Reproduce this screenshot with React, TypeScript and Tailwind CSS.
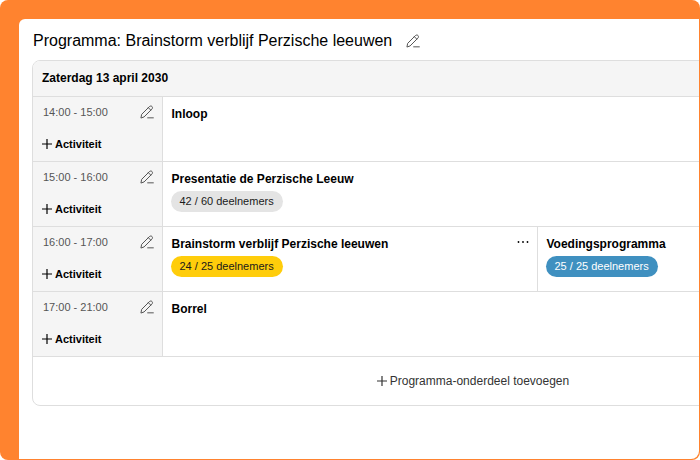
import React from 'react';

type Activity = {
  title: string;
  participants?: string;
  badge?: string;
  menu?: boolean;
};

type Slot = {
  time: string;
  activities: Activity[];
};

const slots: Slot[] = [
  { time: '14:00 - 15:00', activities: [{ title: 'Inloop' }] },
  {
    time: '15:00 - 16:00',
    activities: [
      {
        title: 'Presentatie de Perzische Leeuw',
        participants: '42 / 60 deelnemers',
        badge: 'bg-[#e4e4e4] text-[#1a1a1a]'
      }
    ]
  },
  {
    time: '16:00 - 17:00',
    activities: [
      {
        title: 'Brainstorm verblijf Perzische leeuwen',
        participants: '24 / 25 deelnemers',
        badge: 'bg-[#ffcd0b] text-[#1a1a1a]',
        menu: true
      },
      {
        title: 'Voedingsprogramma',
        participants: '25 / 25 deelnemers',
        badge: 'bg-[#3f90c0] text-white'
      }
    ]
  },
  { time: '17:00 - 21:00', activities: [{ title: 'Borrel' }] }
];

const PencilIcon: React.FC = () => (
  <svg
    viewBox="0 0 42 42"
    className="h-3.5 w-3.5"
    fill="none"
    stroke="currentColor"
    strokeWidth="3"
    strokeLinecap="round"
    strokeLinejoin="round"
    aria-hidden="true"
  >
    <path d="M3 38 L5 28 L28 5 C30.500 2.500 34 2.500 36 4.500 C38 6.500 38 10 35.500 12.500 L13 35 Z" />
    <path d="M25 8 L32 15" />
    <path d="M23 38.500 H40" />
  </svg>
);

const PlusIcon: React.FC = () => (
  <svg viewBox="0 0 10 10" className="h-2.5 w-2.5" fill="none" stroke="currentColor" strokeWidth="1.2" aria-hidden="true">
    <path d="M5 0 V10 M0 5 H10" />
  </svg>
);

const DotsIcon: React.FC = () => (
  <svg viewBox="0 0 12 4" className="h-1 w-3" fill="currentColor" aria-hidden="true">
    <circle cx="1.500" cy="2" r="0.900" />
    <circle cx="6" cy="2" r="0.900" />
    <circle cx="10.500" cy="2" r="0.900" />
  </svg>
);

const App: React.FC = () => {
  return (
    <div className="flex min-h-screen overflow-hidden rounded-lg bg-[#ff832f] pt-[19px] pr-px pb-px pl-[19px] font-['Liberation_Sans',Arial,sans-serif] text-black">
      <main className="min-w-0 flex-1 overflow-hidden rounded-tl-md rounded-br-lg bg-white pt-3 pl-[13px]">
        <div className="mb-[9px] flex h-5 items-center gap-3.5">
          <h1 className="pl-px text-[16px] leading-5">Programma: Brainstorm verblijf Perzische leeuwen</h1>
          <button type="button" aria-label="Programma bewerken" className="text-[#555555]">
            <PencilIcon />
          </button>
        </div>

        <section className="w-full min-w-[882px] overflow-hidden rounded-lg border border-[#dedede]">
          <table className="w-full table-fixed border-collapse text-left">
            <colgroup>
              <col className="w-[129px]" />
              <col className="w-[375px]" />
              <col />
            </colgroup>
            <thead>
              <tr>
                <th colSpan={3} className="h-[35px] border-b border-[#dedede] bg-[#f5f5f5] px-2 text-[12px] leading-4 font-bold">
                  <span className="pl-px">Zaterdag 13 april 2030</span>
                </th>
              </tr>
            </thead>
            <tbody>
              {slots.map((slot) => (
                <tr key={slot.time} className="h-[65px] border-b border-[#dedede]">
                  <th scope="row" className="border-r border-[#dedede] bg-[#f5f5f5] pt-[7px] pr-2 pb-2 pl-2 align-top font-normal">
                    <div className="mb-4 flex h-4 items-center justify-between pl-0.5">
                      <span className="text-[11px] leading-4 text-[#555555]">{slot.time}</span>
                      <button type="button" aria-label={`${slot.time} bewerken`} className="text-[#555555]">
                        <PencilIcon />
                      </button>
                    </div>
                    <button type="button" className="flex items-center gap-[3px] pl-px text-[11px] leading-4 font-bold">
                      <PlusIcon />
                      Activiteit
                    </button>
                  </th>
                  {slot.activities.map((activity) => (
                    <td
                      key={activity.title}
                      colSpan={slot.activities.length === 1 ? 2 : 1}
                      className="border-r border-[#dedede] px-2 pt-[9px] pb-2 align-top last:border-r-0"
                    >
                      <div className="flex items-start justify-between pl-px">
                        <h2 className="text-[12px] leading-4 font-bold">{activity.title}</h2>
                        {activity.menu && (
                          <button type="button" aria-label="Meer opties" className="py-1">
                            <DotsIcon />
                          </button>
                        )}
                      </div>
                      {activity.participants && (
                        <span className={`mt-1 inline-block rounded-full px-[9px] text-[11px] leading-[21px] ${activity.badge}`}>
                          {activity.participants}
                        </span>
                      )}
                    </td>
                  ))}
                </tr>
              ))}
            </tbody>
          </table>
          <button type="button" className="flex h-12 w-full items-center justify-center gap-[3px] text-[12px] leading-4 text-[#333333]">
            <PlusIcon />
            Programma-onderdeel toevoegen
          </button>
        </section>
      </main>
    </div>
  );
};

export default App;
